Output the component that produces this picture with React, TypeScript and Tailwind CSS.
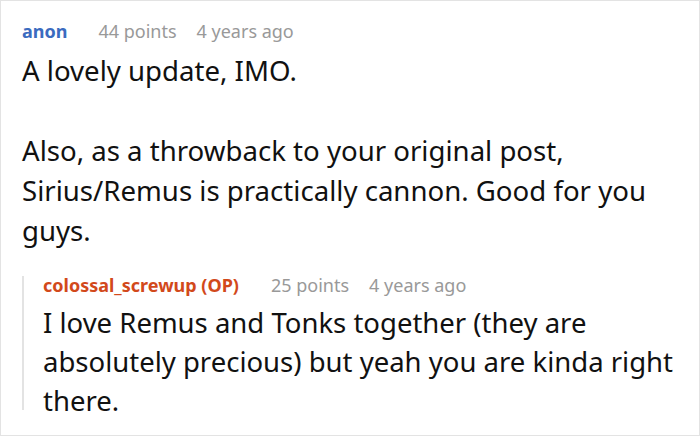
import React from "react";

type Meta = {
    author: string;
    points: string;
    age: string;
    op?: boolean;
};

function CommentHeader({author, points, age, op}: Meta) {
    return (
        <div className="flex items-center h-[24px] text-[18px] leading-none">
            <span className={op ? "font-bold text-[#d2491b]" : "font-bold text-[#3b6bbf]"}>
                {author}
            </span>
            <span className={op ? "ml-[32px] text-[#999999]" : "ml-[31px] text-[#999999]"}>{points}</span>
            <span className="ml-[20px] text-[#999999]">{age}</span>
        </div>
    );
}

export default function App() {
    return (
        <div
            className="w-[700px] h-[436px] bg-white border border-[#e3e3e3] overflow-hidden text-[#111111]"
            style={{fontFamily: '"Noto Sans", "Open Sans", sans-serif'}}
        >
            <div className="pl-[21px] pr-[8px] pt-[18px]">
                <CommentHeader author="anon" points="44 points" age="4 years ago"/>
                <div className="mt-[7px] text-[27.6px] leading-[40px]">
                    <p>A lovely update, IMO.</p>
                    <p className="mt-[40px]">
                        Also, as a throwback to your original post, Sirius/Remus is practically cannon. Good for you
                        guys.
                    </p>
                </div>
                <div className="mt-[23px] flex">
                    <div className="w-[2px] mt-[3px] h-[134px] bg-[#e3e3e3]"/>
                    <div className="pl-[19px] flex-1">
                        <CommentHeader author="colossal_screwup (OP)" points="25 points" age="4 years ago" op/>
                        <div className="mt-[6px] text-[27.5px] leading-[39px]">
                            <p>
                                I love Remus and Tonks together (they are absolutely precious) but yeah you are kinda
                                right there.
                            </p>
                        </div>
                    </div>
                </div>
            </div>
        </div>
    );
}
